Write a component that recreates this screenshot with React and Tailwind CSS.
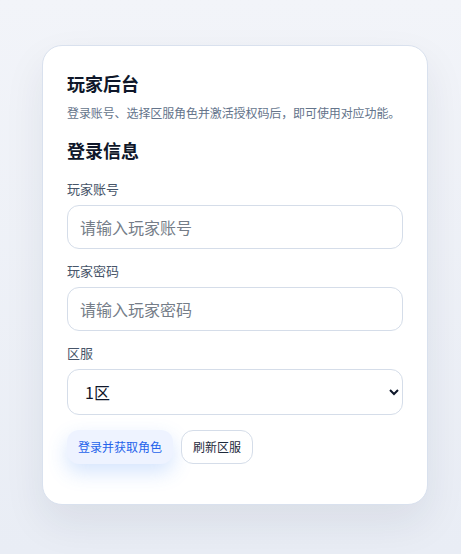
export default function App() {
  return (
    <div
      className="min-h-[554px] w-full bg-gradient-to-b from-[#f2f4f9] to-[#e9edf5] pl-[42px] pt-[45px] pb-[40px]"
      style={{ fontFamily: '"Noto Sans CJK SC", "Noto Sans", sans-serif' }}
    >
      <div className="w-[386px] rounded-[20px] border border-[#d9e1ee] bg-white px-6 pt-6 pb-10 shadow-[0_18px_40px_rgba(30,41,59,0.08)]">
        <h1 className="text-[18px] leading-[27px] font-bold text-[#0f172a]">玩家后台</h1>
        <p className="mt-[7px] whitespace-nowrap text-[12px] leading-[18px] tracking-[-0.1px] text-[#64748b]">
          登录账号、选择区服角色并激活授权码后，即可使用对应功能。
        </p>

        <h2 className="mt-[15px] text-[18px] leading-[27px] font-bold text-[#0f172a]">登录信息</h2>

        <label className="mt-[15px] block text-[13px] leading-[20px] text-[#475569]">玩家账号</label>
        <input
          placeholder="请输入玩家账号"
          className="mt-1.5 block h-[44px] w-full rounded-xl border border-[#d5dde9] bg-white px-3 text-[16px] text-[#0f172a] placeholder:text-[#757d88] outline-none"
        />

        <label className="mt-3 block text-[13px] leading-[20px] text-[#475569]">玩家密码</label>
        <input
          type="password"
          placeholder="请输入玩家密码"
          className="mt-1.5 block h-[44px] w-full rounded-xl border border-[#d5dde9] bg-white px-3 text-[16px] text-[#0f172a] placeholder:text-[#757d88] outline-none"
        />

        <label className="mt-3 block text-[13px] leading-[20px] text-[#475569]">区服</label>
        <select className="mt-1.5 block h-[46px] w-full rounded-xl border border-[#d5dde9] bg-white pl-[13px] pr-2 text-[16px] text-[#0f172a] outline-none">
          <option>1区</option>
          <option>2区</option>
        </select>

        <div className="mt-[15px] flex gap-2">
          <button className="h-[34px] rounded-xl bg-[#eef3ff] px-[11px] text-[12px] text-[#2563eb] shadow-[0_8px_20px_rgba(59,130,246,0.22)]">
            登录并获取角色
          </button>
          <button className="h-[34px] rounded-xl border border-[#d5dde9] bg-white px-[11px] text-[12px] text-[#1e293b]">
            刷新区服
          </button>
        </div>
      </div>
    </div>
  );
}
